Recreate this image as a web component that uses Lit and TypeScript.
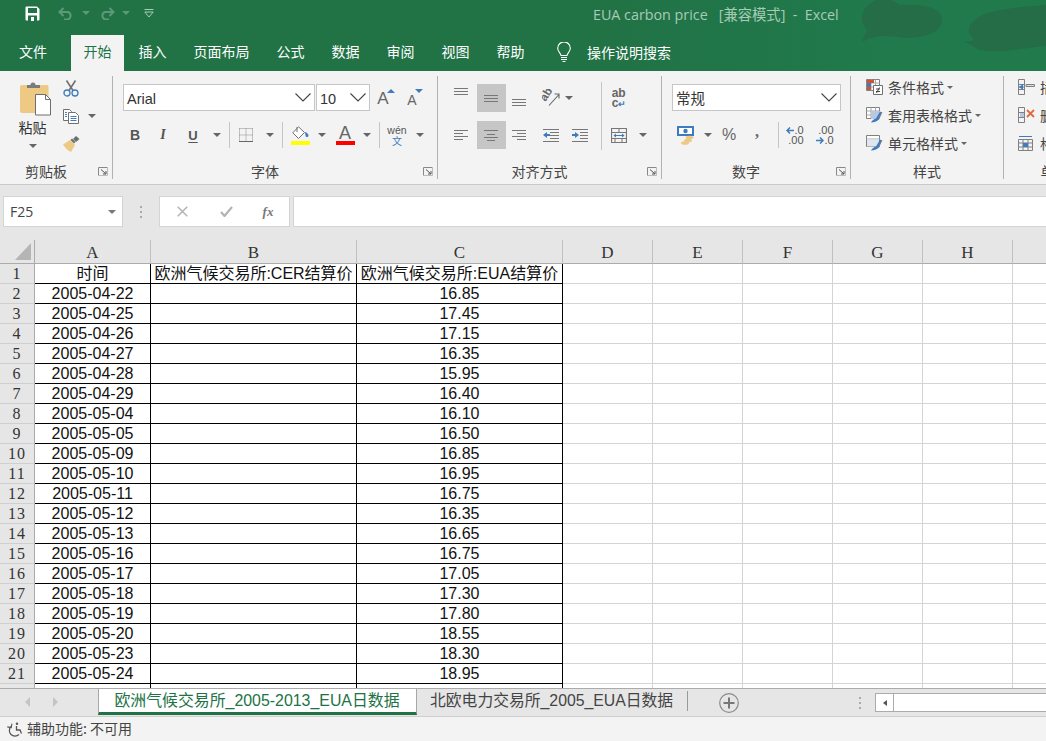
import { LitElement, html, css, svg } from "lit";
import { customElement } from "lit/decorators.js";

const dates = ["2005-04-22","2005-04-25","2005-04-26","2005-04-27","2005-04-28","2005-04-29","2005-05-04","2005-05-05","2005-05-09","2005-05-10","2005-05-11","2005-05-12","2005-05-13","2005-05-16","2005-05-17","2005-05-18","2005-05-19","2005-05-20","2005-05-23","2005-05-24"];
const vals = ["16.85","17.45","17.15","16.35","15.95","16.40","16.10","16.50","16.85","16.95","16.75","16.35","16.65","16.75","17.05","17.30","17.80","18.55","18.30","18.95"];

const ic = (w: number, h: number, body: unknown) => html`<svg width=${w} height=${h} viewBox="0 0 ${w} ${h}" fill="none">${body}</svg>`;
const lines = (ys: number[][], stroke = "#777") => ys.map(([x1, x2, y]) => svg`<line x1=${x1} x2=${x2} y1=${y + .5} y2=${y + .5} stroke=${stroke}/>`);

const chevron = ic(16, 9, svg`<path d="M.5 .5 8 8 15.5 .5" stroke="#444" stroke-width="1.1"/>`);
const launcher = ic(10, 9, svg`<path d="M.5 8.5V.5H9.5" stroke="#888"/><path d="M.5 8.5H9.5V.5" stroke="#bbb"/><path d="M3 2.5 8 7M8 4V7H5" stroke="#555"/>`);
const arrowL = ic(8, 7, svg`<path d="M4 .5 1 3.500 4 6.500M1 3.500h7" stroke="#3f7bbd" stroke-width="1.500"/>`);
const arrowR = ic(8, 7, svg`<path d="M4 .5 7 3.500 4 6.500M7 3.500H0" stroke="#3f7bbd" stroke-width="1.500"/>`);

const icons = {
  save: ic(15, 15, svg`<path d="M.5 1.5a1 1 0 0 1 1-1h10.5l2.5 2.5v10.5a1 1 0 0 1-1 1h-12a1 1 0 0 1-1-1z" fill="#fff"/><rect x="3" y="2" width="9" height="5" fill="#217346"/><rect x="3" y="9.5" width="9" height="5.5" fill="#217346"/><rect x="6" y="11" width="3" height="4" fill="#fff"/>`),
  undo: ic(16, 13, svg`<path d="M5.5 1 1.5 5l4 4M2 5h8a4 4 0 0 1 0 7.5H6" stroke="#5b9a78" stroke-width="2"/>`),
  redo: ic(16, 13, svg`<path d="M10.5 1l4 4-4 4M14 5H6a4 4 0 0 0 0 7.5h4" stroke="#5b9a78" stroke-width="2"/>`),
  custom: ic(10, 9, svg`<path d="M.5 .5h9" stroke="#a9cdb8"/><path d="M.8 3 5 8 9.2 3z" stroke="#a9cdb8"/>`),
  bulb: ic(14, 20, svg`<path d="M4 13.5C3.5 11 .7 9.5.7 6.2a6.3 6.3 0 0 1 12.6 0c0 3.3-2.8 4.8-3.3 7.3z" stroke="#fff" stroke-width="1.1"/><path d="M4 15.5h6M4 17.5h6M5.5 19.5h3" stroke="#fff" stroke-width="1.2"/>`),
  paste: ic(32, 35, svg`<path d="M2 4h25a1.500 1.500 0 0 1 1.500 1.500V32H2a2 2 0 0 1-2-2V6a2 2 0 0 1 2-2z" fill="#eec983"/><path d="M7 7V4h3.500a2.500 2.500 0 0 1 5 0H20v3z" fill="#7b7b7b"/><path d="M15.500 13.500h10l5 5v15.500h-15z" fill="#fff" stroke="#6e6e6e"/><path d="M25.500 13.500v5h5" stroke="#6e6e6e"/>`),
  cut: ic(16, 17, svg`<path d="M3.500 .5 10 10.500M12.500 .5 6 10.500" stroke="#707070" stroke-width="1.600"/><circle cx="4" cy="13" r="3" stroke="#3f7bbd" stroke-width="1.300"/><circle cx="12" cy="13" r="3" stroke="#3f7bbd" stroke-width="1.300"/>`),
  copy: ic(16, 15, svg`<path d="M.5 .5h6l2 2v9h-8z" fill="#fff" stroke="#707070"/><path d="M5.500 3.500h7l3 3v8h-10z" fill="#fff" stroke="#707070"/><path d="M7.500 7.500h6M7.500 9.500h6M7.500 11.500h6M2 3.500h2M2 5.500h2M2 7.500h2" stroke="#3f7bbd"/>`),
  painter: ic(17, 16, svg`<path d="M0 8.500 7 4l5 5-4 7c-2-.5-6-4-8-7.500z" fill="#eec983"/><path d="M7.500 4 11 7.500l1.500-1.500L9 2.500z" fill="#6e6e6e"/><path d="M10 3l3-3 3.500 3-3.500 3z" fill="#6e6e6e"/>`),
  borders: ic(14, 14, svg`<path d="M.5 .5h13M.5 .5v13M13.500 .5v13M7 .5v13M.5 7h13" stroke="#8a8a8a" stroke-dasharray="1 1"/><path d="M0 13.500h14" stroke="#666"/>`),
  fill: ic(19, 19, svg`<path d="M7.500 .8 1.800 6.800 7.500 12.500l6-6z" fill="#fff" stroke="#707070"/><path d="M6 1V6" stroke="#707070"/><path d="M14 6c2 .5 3.500 2 3.500 3.500a1.500 1.500 0 0 1-3 0z" fill="#3f7bbd"/><rect y="15" width="19" height="4" fill="#ffff00"/>`),
  fontColor: html`<span class="acolor"><span class="atext">A</span><span class="abar"></span></span>`,
  wen: html`<span class="wen"><span>wén</span><b>文</b></span>`,
  up: ic(8, 4, svg`<path d="M0 4 4 0 8 4z" fill="#3f7bbd"/>`),
  down: ic(8, 4, svg`<path d="M0 0 4 4 8 0z" fill="#3f7bbd"/>`),
  alTop: ic(15, 9, lines([[0,14,0],[0,14,3],[0,14,6]])),
  alMid: ic(15, 9, lines([[0,14,1],[0,14,4],[0,14,7]])),
  alBot: ic(15, 9, lines([[0,14,1],[0,14,4],[0,14,7]])),
  left: ic(15, 11, lines([[0,14,0],[0,9,3],[0,14,6],[0,9,9]])),
  center: ic(15, 11, lines([[0,14,0],[3,11,4],[0,14,7],[3,11,10]])),
  right: ic(15, 11, lines([[0,14,0],[5,14,3],[0,14,6],[5,14,9]])),
  dec: ic(17, 13, svg`${lines([[0,16,0],[7,16,3],[7,16,6],[7,16,9],[0,16,12]])}<path d="M0 6 4 3v2h3v2H4v2z" fill="#3f7bbd"/>`),
  inc: ic(17, 13, svg`${lines([[0,16,0],[8,16,3],[8,16,6],[8,16,9],[0,16,12]])}<path d="M7 6 3 3v2H0v2h3v2z" fill="#3f7bbd"/>`),
  orient: ic(18, 18, svg`<text transform="translate(3.500 13) rotate(-58)" font-family="Liberation Sans" font-size="11.500" fill="#666" font-weight="700">ab</text><path d="M7 16.500 16.500 6M12.500 5H17V9.500" stroke="#666" stroke-width="1.100"/>`),
  wrap: html`<span class="wrap"><span>ab</span><span>c<i>↵</i></span></span>`,
  merge: ic(16, 15, svg`<path d="M.5 .5h15v14H.5z" stroke="#777" stroke-width="1.200"/><path d="M.5 4.500h15M.5 10.500h15M8 .5v4M4 10.500v4M11 10.500v4" stroke="#777"/><path d="M3 7.500h10" stroke="#3f7bbd"/><path d="M5 5.500 2.500 7.500 5 9.500zM11 5.500l2.500 2L11 9.500z" fill="#3f7bbd"/>`),
  acct: ic(17, 19, svg`<rect width="17" height="10" fill="#3f7bbd"/><rect x="2" y="2" width="13" height="6" fill="#fff"/><circle cx="8.500" cy="5" r="2.200" fill="#3f7bbd"/><ellipse cx="12.500" cy="11.500" rx="4" ry="1.800" fill="#eec983"/><ellipse cx="11" cy="14.500" rx="4" ry="1.800" fill="#eec983"/><ellipse cx="8" cy="17" rx="4" ry="1.800" fill="#eec983"/>`),
  decInc: html`<span class="dd"><span class="ddr">${arrowL}<span>.0</span></span><span class="ddr">.00</span></span>`,
  decDec: html`<span class="dd"><span class="ddr">.00</span><span class="ddr">${arrowR}<span>.0</span></span></span>`,
  cond: ic(17, 16, svg`<path d="M.5 .5h13v11H.5z" fill="#fff" stroke="#808080"/><path d="M5 .5v11M9.500 .5v11M.5 4h13M.5 8h13" stroke="#aaa"/><rect x="1" y="1" width="7" height="3" fill="#d2532e"/><rect x="1" y="4" width="4" height="4" fill="#3f7bbd"/><rect x="1" y="8" width="4" height="3" fill="#d2532e"/><path d="M7.500 6.500h9v9h-9z" fill="#fff" stroke="#707070"/><path d="M10 10h4M10 12.500h4M13.500 8.500l-3 5.500" stroke="#444"/>`),
  table: ic(17, 16, svg`<path d="M.5 .5h13v11H.5z" fill="#fff" stroke="#808080"/><path d="M5 .5v11M9.500 .5v11M.5 4h13M.5 8h13" stroke="#aaa"/><rect x="5" y="4" width="9" height="8" fill="#b7c8e0"/><path d="M5 15.500c3 0 6-1 8-3l3-7-2-1-4 7c-2 .5-4 2-5 4z" fill="#3f7bbd"/><path d="M13 11 16 5" stroke="#808080"/>`),
  cstyle: ic(17, 16, svg`<path d="M.5 .5h13v11H.5z" fill="#fff" stroke="#808080"/><path d="M.5 4h13" stroke="#aaa"/><rect x="1" y="4.500" width="12" height="7" fill="#dfe6f0"/><path d="M5 15.500c3 0 6-1 8-3l3-7-2-1-4 7c-2 .5-4 2-5 4z" fill="#3f7bbd"/><path d="M13 11 16 5" stroke="#808080"/>`),
  insert: ic(17, 16, svg`<path d="M.5 .5h6v15h-6zM.5 5.500h6M.5 10.500h6" stroke="#808080"/><path d="M8 7.500h8.500v-2H8z" stroke="#808080" fill="#ddd"/><path d="M1 8h5" stroke="#3f7bbd"/><path d="M5 5 1 8l4 3z" fill="#3f7bbd"/>`),
  del: ic(17, 16, svg`<path d="M.5 .5h6v15h-6zM.5 5.500h6M.5 10.500h6" stroke="#808080"/><path d="M9 3l7 7M16 3l-7 7" stroke="#e2693f" stroke-width="1.800"/><path d="M2 6h4v4H2z" fill="#b7c8e0"/>`),
  format: ic(17, 16, svg`<path d="M.5 4.500h14v11H.5zM.5 8h14M.5 12h14M5 4.500v11M10 4.500v11" stroke="#808080"/><rect x="5" y="8" width="5" height="4" fill="#3f7bbd"/><path d="M1 1.500h13" stroke="#3f7bbd"/>`),
  x: ic(11, 11, svg`<path d="M.7 .7 10.300 10.300M10.300 .7 .7 10.300" stroke="#b4b4b4" stroke-width="1.500"/>`),
  check: ic(13, 11, svg`<path d="M1 6 4.500 10 12 1" stroke="#b4b4b4" stroke-width="2.200"/>`),
  access: ic(16, 15, svg`<path d="M4.500 1.500V5.500H.5" stroke="#555" stroke-width="1.100" transform="rotate(10 4 4)"/><path d="M4 4.500A5.500 5.500 0 1 0 12 12.500" stroke="#555" stroke-width="1.200"/><circle cx="10" cy="1.700" r="1.200" fill="#555"/><path d="M9.500 4v4h3.500l1.500 3.500" stroke="#555" stroke-width="1.300"/>`),
  plus: ic(20, 20, svg`<circle cx="10" cy="10" r="9.300" stroke="#8a8a8a" stroke-width="1.200"/><path d="M10 4.500v11M4.500 10h11" stroke="#777" stroke-width="2"/>`),
};

@customElement("app-root")
export class AppRoot extends LitElement {
  static styles = css`
    :host { display: block; width: 1046px; height: 741px; overflow: hidden; background: #f3f3f3; font-family: "Noto Sans CJK SC", sans-serif; color: #444; }
    * { box-sizing: border-box; }
    .head { position: relative; height: 71px; color: #fff; background: linear-gradient(90deg, #217346 60%, #207a4c 85%); }
    .art { position: absolute; left: 0; top: 0; }
    .title, .tabs { position: relative; }
    .title { height: 35px; display: flex; align-items: center; padding-bottom: 9px; }
    .qat { width: 593px; flex: none; display: grid; grid-template-columns: 25px 15px 18px 16px 24px 1px 16px 22px 24px; align-items: center; justify-items: center; padding-right: 432px; }
    .qat .gc { border-top-color: #5b9a78; }
    .doc { font: 14.3px "Open Sans", "Noto Sans CJK SC", sans-serif; color: #a7cbb6; white-space: pre; }
    .tabs { height: 36px; display: flex; align-items: center; font-size: 14px; padding-left: 7px; gap: 2px; }
    .tab { height: 36px; padding: 0 12.5px; display: flex; align-items: center; padding-bottom: 4px; white-space: nowrap; }
    .tab.file { padding-left: 12px; width: 62px; }
    .tab.on { background: #f3f3f3; color: #217346; }
    .bulb { margin-left: 18px; display: flex; padding-right: 14px; margin-top: -2px; }
    .search { white-space: nowrap; margin-top: -3px; }

    .ribbon { height: 114px; display: flex; background: #f3f3f3; border-bottom: 1px solid #c9c9c9; overflow: hidden; }
    .group { flex: none; height: 103px; margin-top: 5px; border-right: 1px solid #b2b2b2; display: flex; flex-direction: column; }
    .g1 { width: 113px; } .g2 { width: 325px; } .g3 { width: 224px; } .g4 { width: 189px; } .g5 { width: 153px; } .g6 { width: 115px; border-right: 0; }
    .tools { height: 87px; flex: none; overflow: hidden; }
    .label { flex: 1; display: flex; align-items: flex-start; font-size: 14px; line-height: 16px; color: #444; }
    .label span { flex: 1; text-align: center; }
    .label .launch { flex: none; width: 20px; padding: 4px 0 0 6px; display: flex; }
    .caret { width: 0; height: 0; border: 4px solid transparent; border-top: 4px solid #666; border-bottom: 0; }
    .cell-c { display: flex; align-items: center; justify-content: center; height: 100%; min-width: 0; }
    .vsep { width: 1px; height: 26px; background: #c6c6c6; }

    .clip { display: grid; grid-template-columns: 60px 1fr; }
    .paste { padding: 0 0 0 8px; display: flex; flex-direction: column; align-items: center; width: 60px; font-size: 14px; color: #333; }
    .paste svg { margin: 5px 0 0 3px; }
    .paste .t { margin: 1px 3px 0 0; line-height: 20px; }
    .paste .caret { margin: 7px 2px 0 0; }
    .stack { display: grid; grid-template-rows: repeat(3, 24px); gap: 4px; }
    .stack > div { display: flex; align-items: center; }
    .clipcol { padding-left: 3px; }
    .clipcol .caret { margin-left: 9px; }

    .r1 { height: 27px; margin-top: 8px; display: flex; }
    .r2 { height: 28px; margin-top: 10px; display: grid; align-items: center; }
    .pad { padding-left: 10px; }
    .sel { height: 27px; background: #fff; border: 1px solid #c6c6c6; display: flex; align-items: center; justify-content: space-between; padding: 2px 3px 0 3px; flex: none; font-size: 14.5px; color: #333; }
    .sel svg { margin-top: -2px; }
    .sel.arial { font-family: "Liberation Sans", sans-serif; }
    .sel.font { width: 192px; margin-right: 1px; }
    .sel.size { width: 54px; }
    .sel.num { width: 169px; padding-top: 0; }
    .sel.num svg { margin-top: 0; }
    .grow { width: 29px; display: flex; justify-content: center; align-items: center; }
    .grow .big { font: 17px "Liberation Sans", sans-serif; color: #666; margin-top: 3px; }
    .grow .small { font: 14px "Liberation Sans", sans-serif; color: #666; margin-top: 4px; }
    .grow svg { margin: -14px -3px 0 -2px; }
    .fontr2 { grid-template-columns: 24px 32px 28px 20px 4px 30px 18px 6px 30px 14px 32px 12px 12px 24px 22px; }
    .fb { font: 700 14px "Liberation Sans", sans-serif; color: #555; }
    .fi { font: italic 700 14px "Liberation Serif", serif; color: #555; }
    .fu { font: 700 13px "Liberation Sans", sans-serif; color: #555; text-decoration: underline; text-underline-offset: 2px; }
    .acolor { display: flex; flex-direction: column; align-items: center; width: 19px; }
    .atext { font: 18px/15px "Liberation Sans", sans-serif; color: #666; }
    .abar { width: 19px; height: 4px; background: #ff0000; }
    .wen { display: flex; flex-direction: column; align-items: center; font: 10.5px/11px "Liberation Sans", sans-serif; color: #555; }
    .wen b { font: 400 10px/10px "Noto Sans CJK SC", sans-serif; color: #3f7bbd; }

    .alignwrap { display: flex; padding-left: 7px; height: 87px; }
    .alignblock { width: 154px; flex: none; }
    .alr { height: 28px; display: grid; align-items: center; }
    .alr.a { grid-template-columns: 32px 29px 26px 7px 24px 12px; margin-top: 8px; }
    .alr.b { grid-template-columns: 32px 29px 26px 5px 28px 1px 28px; margin-top: 9px; }
    .on { background: #c6c6c6; }
    .top { align-self: start; padding-top: 4px; height: auto; }
    .bot { align-items: flex-end; padding-bottom: 5px; }
    .alsep { width: 5px; flex: none; display: flex; justify-content: center; padding-top: 6px; }
    .alsep .vsep { height: 68px; }
    .altail { display: grid; grid-template-columns: 30px 18px; grid-template-rows: 28px 28px; row-gap: 9px; margin-top: 8px; height: 65px; align-items: center; }
    .wrap { display: flex; flex-direction: column; font: 700 12px/10px "Liberation Sans", sans-serif; color: #666; }
    .wrap i { color: #3f7bbd; font-style: normal; font-size: 9px; font-weight: 700; }

    .numr2 { grid-template-columns: 26px 20px 22px 34px 8px 26px 34px; }
    .pct { font: 16px "Liberation Sans", sans-serif; color: #666; }
    .com { font: 700 16px/12px "Liberation Serif", serif; color: #666; margin-top: -6px; }
    .dd { display: flex; flex-direction: column; align-items: flex-end; font: 11px/10px "Liberation Sans", sans-serif; color: #555; }
    .ddr { display: flex; align-items: center; height: 10px; }

    .styles { padding-left: 15px; font-size: 14px; color: #444; margin-top: -1px; }
    .styles .ico { width: 22px; display: flex; }
    .styles .caret { margin-left: 3px; border-width: 3.5px; border-bottom: 0; }
    .cells { padding-left: 14px; font-size: 14px; white-space: nowrap; margin-top: -1px; }
    .cells .ico { width: 22px; display: flex; }

    .fbar { height: 55px; background: #e6e6e6; display: flex; padding: 11px 0 13px 3px; }
    .box { background: #fff; border: 1px solid #d4d4d4; height: 31px; display: flex; align-items: center; flex: none; }
    .name { width: 120px; padding: 0 6px; justify-content: space-between; font: 14px "Open Sans", sans-serif; color: #444; }
    .name .caret { border-top-color: #777; }
    .dots { width: 36px; flex: none; display: flex; justify-content: center; align-items: center; }
    .dots span { width: 2px; height: 12px; background-image: repeating-linear-gradient(#aaa 0 2px, transparent 2px 5px); }
    .fxbox { width: 131px; display: grid; grid-template-columns: 44px 44px 40px; justify-items: center; margin-right: 3px; }
    .fx { font: italic 700 13px "Liberation Serif", serif; color: #777; }
    .input { flex: 1; border-right: 0; }

    .wrapgrid { height: 448px; overflow: hidden; background: #fff; }
    .sheet { display: grid; grid-template-columns: 35px 116px 206px 206px repeat(6, 90px); grid-template-rows: 24px; grid-auto-rows: 20px; width: 1103px; }
    .hd { background: #e6e6e6; border-right: 1px solid #c0c0c0; border-bottom: 1px solid #ababab; display: flex; align-items: center; justify-content: center; font: 17px "Liberation Serif", serif; color: #333; padding-top: 3px; }
    .corner { justify-content: flex-end; align-items: flex-end; padding: 0 3px 3px 0; border-right-color: #ababab; }
    .corner i { width: 0; height: 0; border-style: solid; border-width: 0 0 17px 16px; border-color: transparent transparent #b5b5b5 transparent; }
    .rh { background: #e6e6e6; border-right: 1px solid #ababab; border-bottom: 1px solid #cfcfcf; display: flex; align-items: center; justify-content: center; font: 16px "Liberation Serif", serif; letter-spacing: 1px; color: #333; padding-top: 1px; }
    .c { border-right: 1px solid #d4d4d4; border-bottom: 1px solid #d4d4d4; display: flex; align-items: center; justify-content: center; font: 16px/18px "Liberation Sans", "Noto Sans CJK SC", sans-serif; color: #111; white-space: nowrap; overflow: hidden; padding-top: 1px; }
    .c.k { border-color: #000; }
    .c.zh { padding: 0; }

    .sheets { height: 29px; background: #e6e6e6; border-top: 1px solid #ababab; border-bottom: 1px solid #cfcfcf; display: flex; align-items: flex-start; font: 15.8px/18px "Liberation Sans", "Noto Sans CJK SC", sans-serif; }
    .nav { width: 98px; flex: none; height: 26px; display: flex; align-items: center; padding-left: 25px; gap: 23px; }
    .nav i { width: 0; height: 0; border-style: solid; border-width: 5px 5px 5px 0; border-color: transparent #c4c4c4 transparent transparent; }
    .nav i + i { border-width: 5px 0 5px 5px; border-color: transparent transparent transparent #c4c4c4; }
    .stab { height: 26px; display: flex; align-items: center; white-space: nowrap; flex: none; }
    .stab.act { width: 319px; justify-content: center; background: #fff; color: #217346; border-left: 1px solid #a8a8a8; border-right: 1px solid #a8a8a8; border-bottom: 3px solid #217346; font-size: 15.9px; padding-right: 1px; }
    .stab.oth { width: 270px; padding: 0 0 3px 13px; color: #444; }
    .stab .sp { width: 1px; height: 20px; background: #999; margin-left: 14px; flex: none; }
    .addw { width: 83px; flex: none; display: flex; justify-content: center; height: 26px; align-items: center; padding-top: 1px; }
    .sdots { width: 105px; flex: none; display: flex; justify-content: flex-end; padding-right: 14px; height: 26px; align-items: center; padding-top: 2px; }
    .sdots span { width: 2px; height: 12px; background-image: repeating-linear-gradient(#aaa 0 2px, transparent 2px 5px); }
    .scroll { flex: 1; height: 19px; margin-top: 4px; background: #fff; border: 1px solid #ababab; border-right: 0; display: flex; align-items: center; }
    .scroll b { width: 18px; height: 100%; border-right: 1px solid #ababab; display: flex; align-items: center; justify-content: center; }
    .scroll b i { width: 0; height: 0; border-style: solid; border-width: 3.500px 4px 3.500px 0; border-color: transparent #555 transparent transparent; }

    .status { height: 24px; background: #f3f3f3; display: flex; align-items: center; padding: 0 0 3px 7px; gap: 4px; font-size: 14px; color: #444; }
    .status svg { margin-top: 3px; }
  `;

  private caret() { return html`<div class="cell-c"><span class="caret"></span></div>`; }
  private cell(c: unknown, k = "") { return html`<div class="cell-c ${k}">${c}</div>`; }
  private sep() { return html`<div class="cell-c"><span class="vsep"></span></div>`; }
  private empty() { return html`<div></div>`; }
  private group(cls: string, label: string, body: unknown, launch = true) {
    return html`<section class="group ${cls}"><div class="tools">${body}</div>
      <div class="label"><span>${label}</span>${launch ? html`<div class="launch">${launcher}</div>` : ""}</div></section>`;
  }

  render() {
    const cols = ["A", "B", "C", "D", "E", "F", "G", "H", "I"];
    const row = (n: number, a: string, b: string, c: string, zh = "") => html`<div class="rh">${n}</div><div class="c k ${zh}">${a}</div><div class="c k ${zh}">${b}</div><div class="c k ${zh}">${c}</div>${[0,1,2,3,4,5].map(() => html`<div class="c"></div>`)}`;
    return html`
      <header class="head">
        <svg class="art" width="1046" height="71" viewBox="0 0 1046 71" fill="#246d46">
          <path d="M868 5C880-4 890-2 900 5C915 4 942 5 942 20C942 32 925 38 905 38C890 36 880 35 872 38C868 38 864 42 862 41L867 30C860 22 860 12 868 5z"/>
          <path d="M975 20C985 10 1010 8 1046 5V46C1020 48 1000 54 980 50C975 48 970 44 964 41C972 42 974 40 973 38C966 32 968 25 975 20z"/>
        </svg>
        <div class="title">
          <div class="qat">
            <span></span>${icons.save}<span></span>${icons.undo}<span class="caret gc"></span><span></span>${icons.redo}<span class="caret gc"></span>${icons.custom}
          </div>
          <div class="doc">EUA carbon price   [兼容模式]  -  Excel</div>
        </div>
        <nav class="tabs">
          <div class="tab file">文件</div><div class="tab on">开始</div><div class="tab">插入</div><div class="tab">页面布局</div><div class="tab">公式</div><div class="tab">数据</div><div class="tab">审阅</div><div class="tab">视图</div><div class="tab">帮助</div>
          <div class="bulb">${icons.bulb}</div><div class="search">操作说明搜索</div>
        </nav>
      </header>

      <div class="ribbon">
        ${this.group("g1", "剪贴板", html`<div class="clip">
          <div class="paste">${icons.paste}<span class="t">粘贴</span><span class="caret"></span></div>
          <div class="stack clipcol"><div>${icons.cut}</div><div>${icons.copy}<span class="caret"></span></div><div>${icons.painter}</div></div>
        </div>`)}
        ${this.group("g2", "字体", html`
          <div class="pad r1">
            <div class="sel font arial">Arial ${chevron}</div>
            <div class="sel size arial">10 ${chevron}</div>
            <div class="grow"><span class="big">A</span>${icons.up}</div>
            <div class="grow"><span class="small">A</span>${icons.down}</div>
          </div>
          <div class="pad r2 fontr2">
            ${this.cell(html`<span class="fb">B</span>`)}${this.cell(html`<span class="fi">I</span>`)}${this.cell(html`<span class="fu">U</span>`)}${this.caret()}${this.sep()}
            ${this.cell(icons.borders)}${this.caret()}${this.sep()}
            ${this.cell(icons.fill)}${this.caret()}
            ${this.cell(icons.fontColor)}${this.caret()}${this.sep()}
            ${this.cell(icons.wen)}${this.caret()}
          </div>`)}
        ${this.group("g3", "对齐方式", html`<div class="alignwrap">
          <div class="alignblock">
            <div class="alr a">
              ${this.cell(icons.alTop, "top")}${this.cell(icons.alMid, "on")}${this.cell(icons.alBot, "bot")}${this.empty()}${this.cell(icons.orient)}${this.caret()}
            </div>
            <div class="alr b">
              ${this.cell(icons.left)}${this.cell(icons.center, "on")}${this.cell(icons.right)}${this.empty()}${this.cell(icons.dec)}${this.empty()}${this.cell(icons.inc)}
            </div>
          </div>
          <div class="alsep"><span class="vsep"></span></div>
          <div class="altail">
            ${this.cell(icons.wrap)}${this.empty()}${this.cell(icons.merge)}${this.caret()}
          </div>
        </div>`)}
        ${this.group("g4", "数字", html`
          <div class="pad r1"><div class="sel num">常规 ${chevron}</div></div>
          <div class="pad r2 numr2">
            ${this.cell(icons.acct)}${this.caret()}${this.cell(html`<span class="pct">%</span>`)}${this.cell(html`<span class="com">,</span>`)}${this.sep()}${this.cell(icons.decInc)}${this.cell(icons.decDec)}
          </div>`)}
        ${this.group("g5", "样式", html`<div class="stack styles">
          <div><span class="ico">${icons.cond}</span>条件格式<span class="caret"></span></div>
          <div><span class="ico">${icons.table}</span>套用表格格式<span class="caret"></span></div>
          <div><span class="ico">${icons.cstyle}</span>单元格样式<span class="caret"></span></div>
        </div>`, false)}
        ${this.group("g6", "单元格", html`<div class="stack cells">
          <div><span class="ico">${icons.insert}</span>插入</div>
          <div><span class="ico">${icons.del}</span>删除</div>
          <div><span class="ico">${icons.format}</span>格式</div>
        </div>`, false)}
      </div>

      <div class="fbar">
        <div class="box name">F25<span class="caret"></span></div>
        <div class="dots"><span></span></div>
        <div class="box fxbox">${icons.x}${icons.check}<span class="fx">fx</span></div>
        <div class="box input"></div>
      </div>

      <div class="wrapgrid">
        <div class="sheet">
          <div class="hd corner"><i></i></div>
          ${cols.map((c) => html`<div class="hd">${c}</div>`)}
          ${row(1, "时间", "欧洲气候交易所:CER结算价", "欧洲气候交易所:EUA结算价", "zh")}
          ${dates.map((d, i) => row(i + 2, d, "", vals[i]))}
          ${row(22, "", "", "")}
        </div>
      </div>

      <div class="sheets">
        <div class="nav"><i></i><i></i></div>
        <div class="stab act">欧洲气候交易所_2005-2013_EUA日数据</div>
        <div class="stab oth">北欧电力交易所_2005_EUA日数据<span class="sp"></span></div>
        <div class="addw">${icons.plus}</div>
        <div class="sdots"><span></span></div>
        <div class="scroll"><b><i></i></b></div>
      </div>
      <footer class="status">${icons.access}<span>辅助功能: 不可用</span></footer>
    `;
  }
}
